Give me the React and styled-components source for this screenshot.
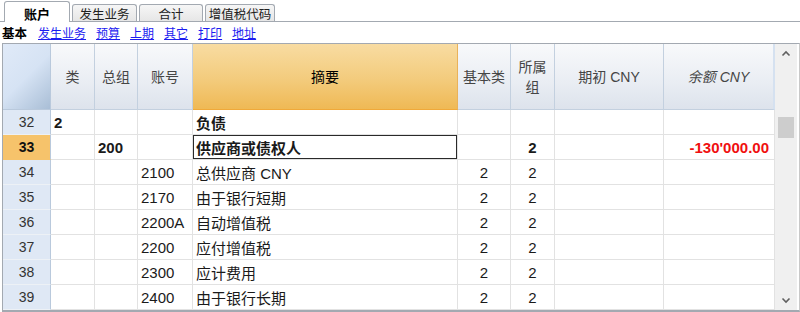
import React from "react";
import styled, { createGlobalStyle, css } from "styled-components";

const Global = createGlobalStyle`
  html, body { margin: 0; padding: 0; background: #fff; }
  body { width: 800px; height: 312px; overflow: hidden; font-family: "Liberation Sans", "Noto Sans CJK SC", sans-serif; }
`;

const FONT = `"Liberation Sans", "Noto Sans CJK SC", sans-serif`;
const COLS = "48px 44px 43px 55px 265px 53px 44px 109px 111px";

const Page = styled.div`
  width: 800px;
  height: 312px;
  display: flex;
  flex-direction: column;
  overflow: hidden;
  font-family: ${FONT};
`;

const TabBar = styled.div`
  height: 22px;
  box-sizing: border-box;
  display: flex;
  align-items: flex-end;
  gap: 2px;
  padding-left: 4px;
  border-bottom: 1px solid #a3a9b1;
  background: #fff;
`;

const Tab = styled.div`
  box-sizing: border-box;
  width: ${(p) => p.$w}px;
  height: ${(p) => (p.$active ? 21 : 17)}px;
  margin-bottom: ${(p) => (p.$active ? -1 : 0)}px;
  border: 1px solid #a3a9b1;
  border-bottom: none;
  border-radius: 3px 3px 0 0;
  display: flex;
  align-items: center;
  justify-content: center;
  font-size: 12.5px;
  color: #222;
  ${(p) =>
    p.$active
      ? css`
          background: #fff;
          font-weight: bold;
          font-size: 13px;
          color: #000;
          padding-top: 2px;
        `
      : css`
          background: linear-gradient(#f6f6f6, #e6e6e6);
        `}
`;

const SubNav = styled.div`
  height: 21px;
  display: flex;
  align-items: center;
  gap: 10px;
  padding-left: 2px;
  font-size: 12px;
`;

const NavCurrent = styled.span`
  font-weight: bold;
  color: #000;
  font-size: 12.5px;
  margin-right: 1px;
`;

const NavLink = styled.a`
  color: #1c1cf0;
  text-decoration: underline;
  cursor: pointer;
`;

const Panel = styled.div`
  flex: 1;
  display: flex;
  margin-left: 2px;
  border-left: 1px solid #a3a9b1;
  border-top: 1px solid #a3a9b1;
  border-bottom: 2px solid #a3a9b1;
  border-right: 1px solid #c9c9c9;
  overflow: hidden;
  min-height: 0;
`;

const Table = styled.div`
  width: 772px;
  display: flex;
  flex-direction: column;
  overflow: hidden;
`;

const HeaderRow = styled.div`
  display: grid;
  grid-template-columns: ${COLS};
  height: 66px;
  flex: none;
`;

const Corner = styled.div`
  background: linear-gradient(135deg, #e0eaf8 0%, #d6e3f4 50%, #a9bed6 100%);
  border-right: 1px solid #b9c9dc;
  border-bottom: 1px solid #b9c9dc;
`;

const HeadCell = styled.div`
  box-sizing: border-box;
  display: flex;
  align-items: center;
  justify-content: center;
  text-align: center;
  font-size: 14px;
  line-height: 20px;
  color: #454545;
  font-style: ${(p) => (p.$italic ? "italic" : "normal")};
  border-right: 1px solid #c3d0df;
  border-bottom: 1px solid #c3d0df;
  background: linear-gradient(#f8f9fb, #e9edf3 60%, #dde3ec);
  ${(p) =>
    p.$active &&
    css`
      color: #000;
      background: linear-gradient(#f8dca2, #f3cb7c 55%, #efb955);
      border-right: 1px solid #e9b25a;
      border-bottom: 1px solid #f0a93a;
    `}
  ${(p) =>
    p.$last &&
    css`
      border-right: 2px solid #d5e1f0;
    `}
`;

const Row = styled.div`
  display: grid;
  grid-template-columns: ${COLS};
  height: 25px;
  flex: none;
`;

const RowNum = styled.div`
  box-sizing: border-box;
  display: flex;
  align-items: center;
  justify-content: center;
  font-size: 14px;
  color: #333;
  background: #dfe8f5;
  border-right: 1px solid #b9c9dc;
  border-bottom: 1px solid #edf1f6;
  ${(p) =>
    p.$current &&
    css`
      background: #f6c36b;
      font-weight: bold;
      color: #111;
      border-bottom-color: #f6c36b;
    `}
`;

const Cell = styled.div`
  box-sizing: border-box;
  display: flex;
  align-items: center;
  justify-content: ${(p) =>
    p.$align === "center" ? "center" : p.$align === "right" ? "flex-end" : "flex-start"};
  padding: 0 ${(p) => (p.$align === "right" ? 5 : 3)}px 0 3px;
  font-size: 15px;
  white-space: nowrap;
  color: ${(p) => (p.$red ? "#f01010" : "#1a1a1a")};
  font-weight: ${(p) => (p.$bold ? "bold" : "normal")};
  border-right: 1px solid #e2e2e2;
  border-bottom: 1px solid #e2e2e2;
  ${(p) =>
    p.$selected &&
    css`
      box-shadow: inset 0 0 0 1px #2a2a2a;
    `}
`;

const Scrollbar = styled.div`
  width: 22px;
  flex: none;
  background: #f0f0f0;
  position: relative;
  display: flex;
  flex-direction: column;
  align-items: center;
  justify-content: space-between;
  padding: 6px 0 6px;
  box-sizing: border-box;
`;

const Thumb = styled.div`
  position: absolute;
  left: 3px;
  right: 3px;
  top: 73px;
  height: 21px;
  background: #cdcdcd;
`;

const Chevron = ({ down }) => (
  <svg width="10" height="8" viewBox="0 0 10 8">
    <path
      d={down ? "M1.5 2.5 L5 6 L8.5 2.5" : "M1.5 5.5 L5 2 L8.5 5.5"}
      fill="none"
      stroke="#606060"
      strokeWidth="1.6"
    />
  </svg>
);

const headers = [
  { t: "类" },
  { t: "总组" },
  { t: "账号" },
  { t: "摘要", active: true },
  { t: "基本类" },
  { t: <>所属<br />组</> },
  { t: "期初 CNY" },
  { t: "余额 CNY", italic: true, last: true },
];

const rows = [
  { n: 32, cls: "2", desc: "负债", boldDesc: true },
  { n: 33, grp: "200", desc: "供应商或债权人", boldDesc: true, g: "2", boldG: true, bal: "-130'000.00", current: true },
  { n: 34, acc: "2100", desc: "总供应商 CNY", b: "2", g: "2" },
  { n: 35, acc: "2170", desc: "由于银行短期", b: "2", g: "2" },
  { n: 36, acc: "2200A", desc: "自动增值税", b: "2", g: "2" },
  { n: 37, acc: "2200", desc: "应付增值税", b: "2", g: "2" },
  { n: 38, acc: "2300", desc: "应计费用", b: "2", g: "2" },
  { n: 39, acc: "2400", desc: "由于银行长期", b: "2", g: "2" },
];

export default function App() {
  return (
    <Page>
      <Global />
      <TabBar>
        <Tab $w={66} $active>账户</Tab>
        <Tab $w={65}>发生业务</Tab>
        <Tab $w={64}>合计</Tab>
        <Tab $w={70}>增值税代码</Tab>
      </TabBar>
      <SubNav>
        <NavCurrent>基本</NavCurrent>
        <NavLink>发生业务</NavLink>
        <NavLink>预算</NavLink>
        <NavLink>上期</NavLink>
        <NavLink>其它</NavLink>
        <NavLink>打印</NavLink>
        <NavLink>地址</NavLink>
      </SubNav>
      <Panel>
        <Table>
          <HeaderRow>
            <Corner />
            {headers.map((h, i) => (
              <HeadCell key={i} $active={h.active} $italic={h.italic} $last={h.last}>
                {h.t}
              </HeadCell>
            ))}
          </HeaderRow>
          {rows.map((r) => (
            <Row key={r.n}>
              <RowNum $current={r.current}>{r.n}</RowNum>
              <Cell $bold>{r.cls}</Cell>
              <Cell $bold>{r.grp}</Cell>
              <Cell>{r.acc}</Cell>
              <Cell $bold={r.boldDesc} $selected={r.current}>{r.desc}</Cell>
              <Cell $align="center">{r.b}</Cell>
              <Cell $align="center" $bold={r.boldG}>{r.g}</Cell>
              <Cell />
              <Cell $align="right" $bold $red>{r.bal}</Cell>
            </Row>
          ))}
        </Table>
        <Scrollbar>
          <Chevron />
          <Thumb />
          <Chevron down />
        </Scrollbar>
      </Panel>
    </Page>
  );
}
